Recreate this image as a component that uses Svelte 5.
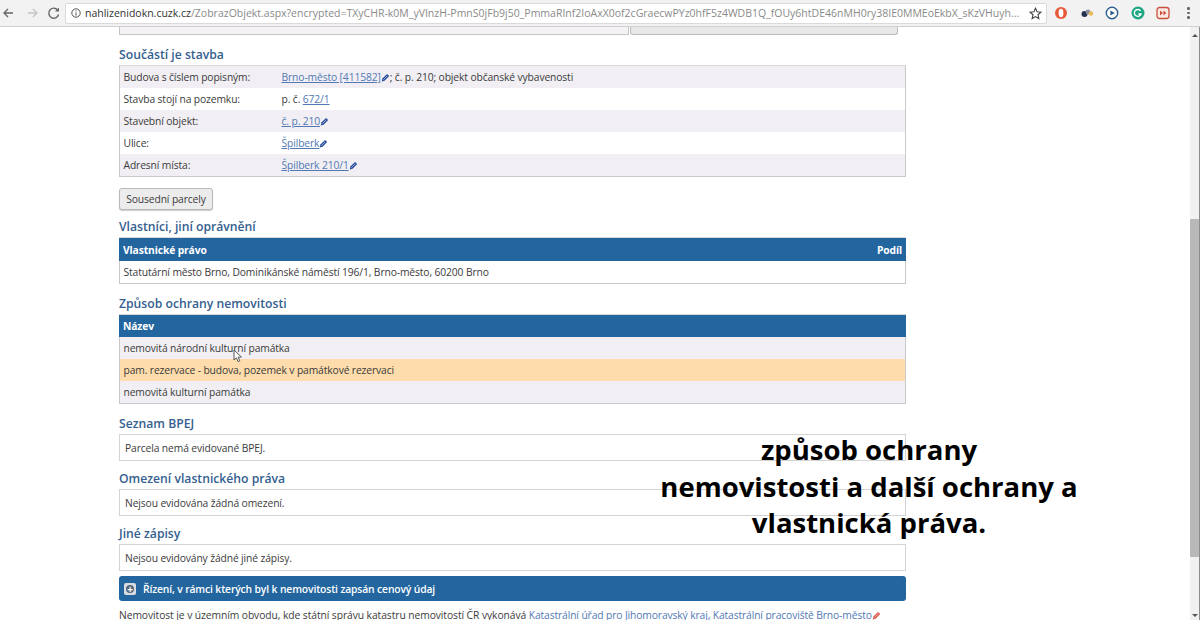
<script>
	const parts = [
		{ label: 'Budova s číslem popisným:', link: 'Brno-město [411582]', ext: true, rest: '; č. p. 210; objekt občanské vybavenosti' },
		{ label: 'Stavba stojí na pozemku:', pre: 'p. č. ', link: '672/1' },
		{ label: 'Stavební objekt:', link: 'č. p. 210', ext: true },
		{ label: 'Ulice:', link: 'Špilberk', ext: true },
		{ label: 'Adresní místa:', link: 'Špilberk 210/1', ext: true }
	];
	const notes = [
		{ title: 'Seznam BPEJ', text: 'Parcela nemá evidované BPEJ.' },
		{ title: 'Omezení vlastnického práva', text: 'Nejsou evidována žádná omezení.' },
		{ title: 'Jiné zápisy', text: 'Nejsou evidovány žádné jiné zápisy.' }
	];
</script>

{#snippet pencil(color)}
	<svg class="pencil" width="9" height="9" viewBox="0 0 9 9"><path d="M0.8 8.4 L1.4 5.6 L6 1 L8.2 3 L3.6 7.7 Z" fill={color} /><path d="M2.4 6.6 L6.2 2.8" stroke="#fff" stroke-width="0.5" /></svg>
{/snippet}

<div class="browser">
	<header class="toolbar">
		<svg class="nav" width="65" height="20" viewBox="0 0 65 20" fill="none">
			<path d="M13 10 H4 M8 6 L4 10 L8 14" stroke="#666" stroke-width="1.3" />
			<path d="M28 10 H37 M33 6 L37 10 L33 14" stroke="#c4c4c4" stroke-width="1.3" />
			<path d="M58 7.5 A5 5 0 1 0 58.6 11.5" stroke="#666" stroke-width="1.4" />
			<path d="M59 4.5 V8.5 H55 Z" fill="#666" />
		</svg>
		<div class="omnibox">
			<svg width="10" height="10" viewBox="0 0 10 10" fill="none"><circle cx="5" cy="5" r="4.2" stroke="#555" /><path d="M5 4.4 V7.6 M5 2.4 V3.4" stroke="#555" /></svg>
			<span class="url"><b>nahlizenidokn.cuzk.cz</b>/ZobrazObjekt.aspx?encrypted=TXyCHR-k0M_yVInzH-PmnS0jFb9j50_PmmaRInf2IoAxX0of2cGraecwPYz0hfF5z4WDB1Q_fOUy6htDE46nMH0ry38IE0MMEoEkbX_sKzVHuyh...</span>
			<svg width="13" height="13" viewBox="0 0 14 14" fill="none"><path d="M7 1.4 L8.7 5.2 L12.8 5.6 L9.7 8.3 L10.6 12.4 L7 10.3 L3.4 12.4 L4.3 8.3 L1.2 5.6 L5.3 5.2 Z" stroke="#444" stroke-width="1.2" /></svg>
		</div>
		<div class="extensions">
			<svg width="14" height="14" viewBox="0 0 14 14"><circle cx="7" cy="7" r="6" fill="#e8593a" /><ellipse cx="7" cy="7" rx="2.4" ry="4.2" fill="#fff" /></svg>
			<svg width="14" height="14" viewBox="0 0 14 14"><circle cx="4.5" cy="8" r="3" fill="#27324f" /><circle cx="8" cy="6" r="2.4" fill="#8a8fa0" /><circle cx="11" cy="7.5" r="2.2" fill="#e9bb57" /></svg>
			<svg width="14" height="14" viewBox="0 0 14 14"><circle cx="7" cy="7" r="5.7" fill="#fff" stroke="#2f5c8f" stroke-width="1.4" /><path d="M5.4 4.4 L9.8 7 L5.4 9.6 Z" fill="#2f5c8f" /></svg>
			<svg width="14" height="14" viewBox="0 0 14 14" fill="none"><circle cx="7" cy="7" r="6.5" fill="#1fa684" /><path d="M9.6 5 A3.4 3.4 0 1 0 10 8 H7.4" stroke="#fff" stroke-width="1.3" /></svg>
			<svg width="14" height="14" viewBox="0 0 14 14"><rect x="1" y="1.5" width="12" height="11" rx="2.5" fill="#fbe9e4" stroke="#c8503c" stroke-width="1.3" /><path d="M4 4.5 L7 7 L4 9.5 Z M7.4 4.5 L10.4 7 L7.4 9.5 Z" fill="#c8503c" /></svg>
		</div>
		<div class="kebab"><i></i><i></i><i></i></div>
	</header>

	<div class="viewport">
		<main class="page">
			<div class="cut">
				<div class="cut-panel"></div>
				<div class="cut-button"></div>
			</div>

			<h2 class="first">Součástí je stavba</h2>
			<div class="table">
				{#each parts as p}
					<div class="row part">
						<span class="label">{p.label}</span>
						<span>{p.pre ?? ''}<a href="#top">{p.link}</a>{#if p.ext}{@render pencil('#2b4f9c')}{/if}{p.rest ?? ''}</span>
					</div>
				{/each}
			</div>

			<button class="neighbours">Sousední parcely</button>

			<h2 class="owners">Vlastníci, jiní oprávnění</h2>
			<div class="table">
				<div class="row head"><span>Vlastnické právo</span><span>Podíl</span></div>
				<div class="row plain">Statutární město Brno, Dominikánské náměstí 196/1, Brno-město, 60200 Brno</div>
			</div>

			<h2 class="protect">Způsob ochrany nemovitosti</h2>
			<div class="table">
				<div class="row head short"><span>Název</span></div>
				<div class="row grey">nemovitá národní kulturní památka</div>
				<div class="row orange">pam. rezervace - budova, pozemek v památkové rezervaci</div>
				<div class="row grey">nemovitá kulturní památka</div>
			</div>

			{#each notes as n, i}
				<h2 class="note-title" class:later={i > 0}>{n.title}</h2>
				<div class="note">{n.text}</div>
			{/each}

			<div class="bar">
				<span class="plus"></span>
				<span>Řízení, v rámci kterých byl k nemovitosti zapsán cenový údaj</span>
			</div>

			<p class="office">Nemovitost je v územním obvodu, kde státní správu katastru nemovitostí ČR vykonává <a href="#top">Katastrální úřad pro Jihomoravský kraj, Katastrální pracoviště Brno-město</a>{@render pencil('#e0584a')}</p>
		</main>

		<div class="scrollbar">
			<span class="arrow up"></span>
			<div class="thumb"></div>
			<span class="arrow down"></span>
		</div>

		<svg class="cursor" width="11" height="14" viewBox="0 0 11 14"><path d="M1 1 V11 L3.4 8.8 L5 12.6 L6.8 11.8 L5.2 8.2 L8.4 8 Z" fill="#fff" stroke="#444" stroke-width="0.9" /></svg>

		<div class="caption">způsob ochrany<br />nemovistosti a další ochrany a<br />vlastnická práva.</div>
	</div>
</div>

<style>
	:global(body) {
		margin: 0;
		background: #fff;
		overflow: hidden;
	}
	.browser {
		width: 1200px;
		height: 620px;
		display: flex;
		flex-direction: column;
		overflow: hidden;
		font-family: 'Open Sans', 'Noto Sans', sans-serif;
		color: #3b3b3b;
	}
	.toolbar {
		height: 27px;
		flex: none;
		box-sizing: border-box;
		display: flex;
		align-items: center;
		background: #f2f2f2;
		border-bottom: 1px solid #d0d0d0;
	}
	.nav {
		flex: none;
	}
	.omnibox {
		width: 982px;
		height: 21px;
		box-sizing: border-box;
		flex: none;
		display: flex;
		align-items: center;
		gap: 4px;
		padding: 0 4px 0 5px;
		background: #fff;
		border: 1px solid #dadada;
		border-radius: 2px;
	}
	.url {
		flex: 1;
		white-space: nowrap;
		overflow: hidden;
		font-size: 10.5px;
		color: #8a8a8a;
	}
	.url b {
		font-weight: 400;
		color: #333;
	}
	.extensions {
		display: flex;
		gap: 11.5px;
		margin-left: 7px;
		align-items: center;
	}
	.kebab {
		margin-left: 17px;
		display: flex;
		flex-direction: column;
		gap: 2px;
	}
	.kebab i {
		width: 2.5px;
		height: 2.5px;
		border-radius: 50%;
		background: #666;
	}
	.viewport {
		position: relative;
		flex: 1;
		display: flex;
		overflow: hidden;
	}
	.page {
		width: 787px;
		margin-left: 119px;
		font-size: 10.3px;
		letter-spacing: -0.12px;
	}
	.cut {
		display: flex;
		height: 8px;
		gap: 1px;
		margin-right: 8px;
	}
	.cut-panel {
		width: 510px;
		border: 1px solid #c6c6c6;
		border-top: none;
		background: #f4f2f5;
		box-sizing: border-box;
	}
	.cut-button {
		flex: 1;
		background: #e8e8e8;
		border: 1px solid #bdbdbd;
		border-top: none;
		border-radius: 0 0 3px 3px;
		box-sizing: border-box;
	}
	h2 {
		margin: 0;
		font-size: 12.2px;
		font-weight: 600;
		line-height: 16px;
		letter-spacing: 0;
		color: #34608f;
	}
	h2.first {
		margin-top: 12px;
		margin-bottom: 3px;
	}
	h2.owners {
		margin-top: 9px;
		margin-bottom: 3px;
	}
	h2.protect {
		margin-top: 12px;
		margin-bottom: 3px;
	}
	.table {
		border: 1px solid #c9c9c9;
		border-top: none;
		box-shadow: 0 -1px 0 #d8d8d8;
	}
	.row {
		height: 22px;
		display: flex;
		align-items: center;
		padding: 0 3.5px;
	}
	.part:nth-child(odd),
	.grey {
		background: #f1eff3;
	}
	.label {
		width: 158px;
		flex: none;
	}
	.head {
		height: 23px;
		margin: 0 -1px;
		padding: 0 4px;
		justify-content: space-between;
		background: #23669f;
		color: #fff;
		font-weight: 700;
	}
	.head.short {
		height: 22px;
	}
	.orange {
		background: #fedcab;
	}
	a {
		color: #5279b3;
		text-decoration: underline;
		letter-spacing: -0.12px;
	}
	.pencil {
		vertical-align: -1px;
	}
	.neighbours {
		display: block;
		margin-top: 11px;
		height: 22px;
		width: 94px;
		padding: 0;
		font: inherit;
		letter-spacing: inherit;
		color: #3b3b3b;
		background: #ececec;
		border: 1px solid #b9b9b9;
		border-radius: 3px;
		box-shadow: 0 1px 1px #ccc;
	}
	.note-title {
		margin-top: 12px;
		margin-bottom: 3px;
		line-height: 15px;
	}
	.note-title.later {
		margin-top: 10px;
	}
	.note {
		height: 27px;
		box-sizing: border-box;
		display: flex;
		align-items: center;
		padding-left: 5px;
		border: 1px solid #d4d4d4;
	}
	.bar {
		margin-top: 5px;
		height: 25px;
		display: flex;
		align-items: center;
		gap: 7px;
		padding-left: 5px;
		background: #23669f;
		border-radius: 3px;
		color: #fff;
		font-weight: 600;
	}
	.plus {
		position: relative;
		width: 12px;
		height: 12px;
		flex: none;
		background: #d9dde2;
		border-radius: 2px;
	}
	.plus::before {
		content: '';
		position: absolute;
		inset: 2px;
		border-radius: 50%;
		background: #54657a;
	}
	.plus::after {
		content: '+';
		position: absolute;
		inset: 0;
		text-align: center;
		font-size: 10px;
		line-height: 12px;
		font-weight: 700;
		color: #fff;
	}
	.office {
		margin: 6px 0 0;
		white-space: nowrap;
		line-height: 16px;
		letter-spacing: -0.075px;
	}
	.scrollbar {
		position: absolute;
		right: 0;
		top: 0;
		bottom: 0;
		width: 10px;
		box-sizing: border-box;
		background: #f1f1f1;
		border-right: 1px solid #8c8c8c;
	}
	.thumb {
		position: absolute;
		top: 192px;
		left: 0;
		right: 0;
		height: 338px;
		background: #b8b8b8;
	}
	.arrow {
		position: absolute;
		left: 2px;
		border-left: 3px solid transparent;
		border-right: 3px solid transparent;
	}
	.up {
		top: 7px;
		border-bottom: 3px solid #555;
	}
	.down {
		bottom: 3px;
		border-top: 3px solid #555;
	}
	.cursor {
		position: absolute;
		left: 233px;
		top: 322px;
	}
	.caption {
		position: absolute;
		left: 660px;
		top: 405px;
		width: 418px;
		text-align: center;
		font-size: 27.5px;
		font-weight: 700;
		line-height: 36.5px;
		color: #000;
	}
</style>
